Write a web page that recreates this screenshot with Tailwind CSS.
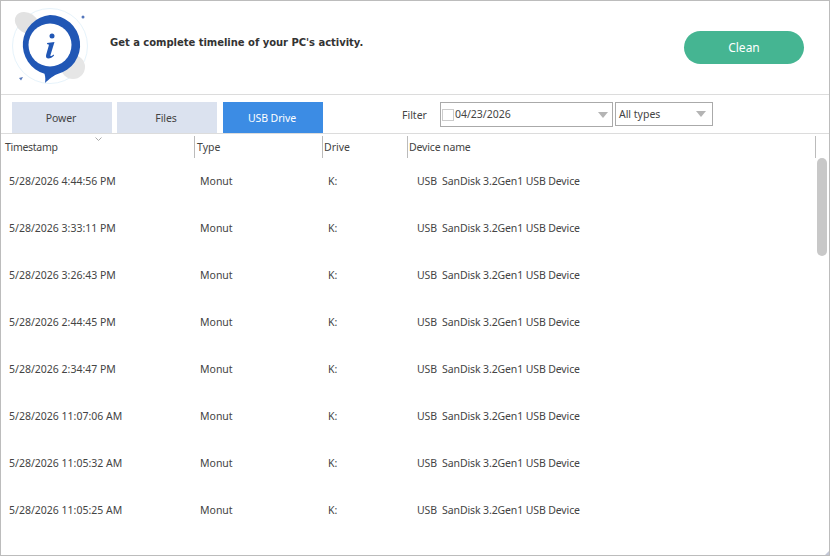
<!DOCTYPE html>
<html lang="en">
<head>
  <meta charset="UTF-8" />
  <title>Timeline</title>
  <script src="https://cdn.jsdelivr.net/npm/@tailwindcss/browser@4"></script>
</head>
<body class="bg-white">
  <div class="relative w-[830px] h-[556px] overflow-hidden bg-white border border-[#bcbcbc] flex flex-col font-['Noto_Sans',sans-serif] text-[10.5px] text-[#444]">

    <!-- Header -->
    <header class="h-[94px] shrink-0 flex items-center border-b border-[#dcdcdc] pl-[10px] pr-[25px]">
      <svg class="w-[78px] h-[78px] shrink-0 mt-[-5px]" viewBox="0 0 78 78">
        <circle cx="39" cy="40" r="37.500" fill="none" stroke="#e6f3fb" stroke-width="1" />
        <ellipse cx="16" cy="17" rx="13" ry="10" fill="#e2e2e2" transform="rotate(35 16 17)" />
        <ellipse cx="62" cy="61" rx="12" ry="12" fill="#e6e6e6" />
        <circle cx="72" cy="11" r="1.500" fill="#5577bb" />
        <path d="M8 72l4 -1l-2 3.500z" fill="#5577bb" />
        <path d="M39 9a30 30 0 0 1 7 59.200c-3 .8-8 5-12 8.800c.5-3 .5-6-.5-9.300a30 30 0 0 1 5.500-58.700z" fill="#2157b5" />
        <circle cx="39" cy="39" r="21.500" fill="#fff" />
        <circle cx="41" cy="30" r="2.500" fill="#2157b5" />
        <path d="M36 37l7.500-1l-4 13c-.5 1.500 .8 1.500 3-.5l.6 1c-3.200 3.600-9 4.500-8-.5l2.700-9.500c.2-.9-.5-1.300-1.600-1.200z" fill="#2157b5" />
      </svg>
      <p class="ml-[21px] mt-[-11px] font-['DejaVu_Sans',sans-serif] font-bold text-[10px] tracking-[-0.03px] text-[#333]">Get a complete timeline of your PC's activity.</p>
      <button class="ml-auto w-[120px] h-[33px] rounded-full bg-[#45b592] text-white text-[12px]">Clean</button>
    </header>

    <!-- Tabs and filter -->
    <div class="h-[39px] shrink-0 flex border-b border-[#dcdcdc] pt-[7px] pl-[11px]">
      <div class="flex items-stretch">
        <button class="w-[100px] pt-[2px] pr-[2px] tracking-[-0.1px] bg-[#dbe2ef] text-[#444]">Power</button>
        <button class="w-[100px] pt-[2px] pr-[2px] tracking-[-0.1px] ml-[5px] bg-[#dbe2ef] text-[#444]">Files</button>
        <button class="w-[100px] pt-[2px] pr-[2px] tracking-[-0.1px] ml-[6px] bg-[#3c8ce4] text-white">USB Drive</button>
      </div>
      <span class="ml-[79px] mt-[6px]">Filter</span>
      <div class="ml-[13px] w-[173px] h-[25px] border border-[#aaa] flex items-center pl-[1px] pr-[4px]">
        <span class="w-[12px] h-[12px] border border-[#ccc] mr-[1px]"></span>
        <span class="pt-[1px]">04/23/2026</span>
        <span class="ml-auto w-0 h-0 border-x-[5px] border-x-transparent border-t-[6px] border-t-[#b4b4b4]"></span>
      </div>
      <div class="ml-[2px] w-[98px] h-[24px] border border-[#aaa] flex items-center pl-[3px] pr-[6px]">
        <span class="pt-[1px]">All types</span>
        <span class="ml-auto w-0 h-0 border-x-[5px] border-x-transparent border-t-[6px] border-t-[#b4b4b4]"></span>
      </div>
    </div>

    <!-- Table -->
    <div class="relative flex-1 overflow-hidden">
      <div class="h-[25px] mt-[2px] grid grid-cols-[193px_128px_85px_408px_1fr] relative">
        <div class="relative pl-[4px] leading-[22px] tracking-[-0.3px]">Timestamp
          <svg class="absolute left-[94px] top-[1px] w-[7px] h-[4px]" viewBox="0 0 7 4"><path d="M.5.500L3.500 3.500L6.500.500" fill="none" stroke="#aaa" /></svg>
        </div>
        <div class="border-l border-[#bbb] h-[22px] pl-[2px] leading-[22px]">Type</div>
        <div class="border-l border-[#bbb] h-[22px] pl-[1px] leading-[22px]">Drive</div>
        <div class="border-l border-[#bbb] h-[22px] pl-[1px] leading-[22px] tracking-[-0.15px]">Device name</div>
        <div class="border-l border-[#bbb] h-[22px]"></div>
      </div>

      <div class="mt-[-3px]">
        <div class="h-[47px] grid grid-cols-[191px_128px_89px_1fr] items-center pl-[8px]">
          <span>5/28/2026 4:44:56 PM</span><span>Monut</span><span>K:</span><span class="tracking-[-0.12px]">USB&nbsp; SanDisk 3.2Gen1 USB Device</span>
        </div>
        <div class="h-[47px] grid grid-cols-[191px_128px_89px_1fr] items-center pl-[8px]">
          <span>5/28/2026 3:33:11 PM</span><span>Monut</span><span>K:</span><span class="tracking-[-0.12px]">USB&nbsp; SanDisk 3.2Gen1 USB Device</span>
        </div>
        <div class="h-[47px] grid grid-cols-[191px_128px_89px_1fr] items-center pl-[8px]">
          <span>5/28/2026 3:26:43 PM</span><span>Monut</span><span>K:</span><span class="tracking-[-0.12px]">USB&nbsp; SanDisk 3.2Gen1 USB Device</span>
        </div>
        <div class="h-[47px] grid grid-cols-[191px_128px_89px_1fr] items-center pl-[8px]">
          <span>5/28/2026 2:44:45 PM</span><span>Monut</span><span>K:</span><span class="tracking-[-0.12px]">USB&nbsp; SanDisk 3.2Gen1 USB Device</span>
        </div>
        <div class="h-[47px] grid grid-cols-[191px_128px_89px_1fr] items-center pl-[8px]">
          <span>5/28/2026 2:34:47 PM</span><span>Monut</span><span>K:</span><span class="tracking-[-0.12px]">USB&nbsp; SanDisk 3.2Gen1 USB Device</span>
        </div>
        <div class="h-[47px] grid grid-cols-[191px_128px_89px_1fr] items-center pl-[8px]">
          <span>5/28/2026 11:07:06 AM</span><span>Monut</span><span>K:</span><span class="tracking-[-0.12px]">USB&nbsp; SanDisk 3.2Gen1 USB Device</span>
        </div>
        <div class="h-[47px] grid grid-cols-[191px_128px_89px_1fr] items-center pl-[8px]">
          <span>5/28/2026 11:05:32 AM</span><span>Monut</span><span>K:</span><span class="tracking-[-0.12px]">USB&nbsp; SanDisk 3.2Gen1 USB Device</span>
        </div>
        <div class="h-[47px] grid grid-cols-[191px_128px_89px_1fr] items-center pl-[8px]">
          <span>5/28/2026 11:05:25 AM</span><span>Monut</span><span>K:</span><span class="tracking-[-0.12px]">USB&nbsp; SanDisk 3.2Gen1 USB Device</span>
        </div>
      </div>

      <!-- Scrollbar thumb -->
      <div class="absolute left-[816px] top-[24px] w-[10px] h-[98px] rounded-[5px] bg-[#c8c8c8]"></div>
    </div>

    <!-- Resize grip -->
    <svg class="absolute right-0 bottom-0 w-[4px] h-[4px]" viewBox="0 0 4 4"><path d="M4 0V4H0z" fill="#c3c7d6" /></svg>
  </div>
</body>
</html>
